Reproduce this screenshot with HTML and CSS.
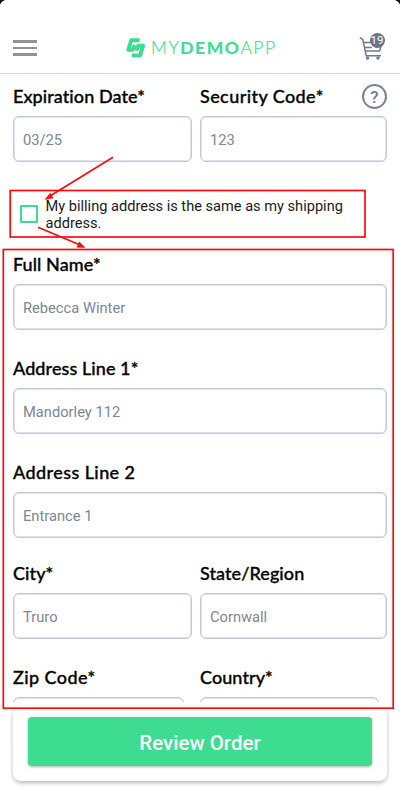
FILE: index.html
```html
<!DOCTYPE html>
<html lang="en">
<head>
<meta charset="utf-8">
<title>My Demo App - Checkout</title>
<link rel="stylesheet" href="styles.css">
</head>
<body>
<div class="app">
  <header class="header">
    <div class="menu"><span></span><span></span><span></span></div>
    <div class="brand">
      <svg class="mark" width="20" height="20" viewBox="0 0 20 20" fill="none" stroke="#3ddc91" stroke-width="4" stroke-linejoin="round">
        <path d="M13.600 2.200H5.200L2.400 11.800H6.600L8.800 7.200"/>
        <path d="M10.200 12.600 12.300 7.700H17L14.200 17.400H5.800"/>
      </svg>
      <div class="word">MY<b>DEMO</b>APP</div>
    </div>
    <div class="cart">
      <svg width="28" height="30" viewBox="0 0 28 30" fill="none" stroke="#717a8c" stroke-width="1.500">
        <path d="M.8 4.700 3.800 6.500 7.200 22.700H22M4.500 9.500H12M5.800 18H20.500L22 13.500M5.500 14.500H13"/>
        <circle cx="8.500" cy="25" r="1"/><circle cx="19" cy="25" r="1"/>
      </svg>
      <span class="badge">19</span>
    </div>
  </header>

  <main class="form">
    <div class="row first">
      <div class="field"><div class="label">Expiration Date*</div><div class="input">03/25</div></div>
      <div class="field"><div class="label wide">Security Code*<span class="help">?</span></div><div class="input">123</div></div>
    </div>
    <div class="same">
      <span class="check"></span>
      <div class="same-text">My billing address is the same as my shipping<br>address.</div>
    </div>
    <div class="field"><div class="label">Full Name*</div><div class="input">Rebecca Winter</div></div>
    <div class="field"><div class="label">Address Line 1*</div><div class="input">Mandorley 112</div></div>
    <div class="field last"><div class="label wide">Address Line 2</div><div class="input">Entrance 1</div></div>
    <div class="row">
      <div class="field"><div class="label">City*</div><div class="input">Truro</div></div>
      <div class="field"><div class="label">State/Region</div><div class="input">Cornwall</div></div>
    </div>
    <div class="row cut">
      <div class="field"><div class="label wide">Zip Code*</div><div class="input"></div></div>
      <div class="field"><div class="label">Country*</div><div class="input"></div></div>
    </div>
  </main>

  <footer class="footer"><div class="button">Review Order</div></footer>

  <svg class="notes" width="400" height="787" viewBox="0 0 400 787">
    <path fill="#161616" d="M0 0H5Q1.500 1 0 4.500ZM400 0H395Q398.500 1 400 4.500Z"/>
    <g fill="none" stroke="#fb0d0d" stroke-width="1.700">
      <rect x="10.200" y="190.500" width="354.800" height="46.500"/>
      <rect x="3.300" y="249.500" width="389.900" height="458.700"/>
      <path d="M113 157.300 50 196M38 227.300 79 244.500"/>
    </g>
    <path fill="#fb0d0d" d="M44.500 199.800 50.300 192.800 53.500 198.300ZM85.500 247.800 76.500 247.500 79.200 241.500Z"/>
  </svg>
</div>
</body>
</html>
```
FILE: styles.css
```css
* { box-sizing: border-box; }
body { margin: 0; background: #fff; }
.app {
  position: relative;
  width: 400px;
  height: 787px;
  overflow: hidden;
  background: #fff;
  font-family: Roboto, sans-serif;
  display: flex;
  flex-direction: column;
}
.header {
  height: 74px;
  flex: none;
  padding: 22px 13px 0 13px;
  border-bottom: 1px solid #d6d7da;
  display: flex;
  align-items: center;
}
.menu { display: flex; flex-direction: column; gap: 4px; width: 24px; padding-top: 1px; }
.menu span { height: 2.500px; background: #929292; }
.brand { display: flex; align-items: center; gap: 5px; margin-left: 89px; }
.word {
  font: 300 17.500px/20px Lato, sans-serif;
  letter-spacing: 1.500px;
  color: #3ddc91;
  -webkit-text-stroke: .2px #3ddc91;
}
.word b { font-weight: 700; }
.cart { position: relative; width: 28px; height: 30px; margin-left: auto; }
.cart svg { display: block; }
.badge {
  position: absolute;
  left: 10.500px;
  top: 0;
  width: 15px;
  height: 15px;
  border-radius: 50%;
  background: #697386;
  color: #fff;
  font-size: 11.500px;
  line-height: 15px;
  text-align: center;
}
.form { height: 628px; flex: none; overflow: hidden; padding: 12px 13px 0; }
.row { display: grid; grid-template-columns: 179px 187px; gap: 8px; }
.label {
  display: flex;
  justify-content: space-between;
  align-items: center;
  height: 20px;
  margin-bottom: 10px;
  font: 500 18px/20px Lato, sans-serif;
  letter-spacing: .08px;
  font-variant-ligatures: none;
  -webkit-text-stroke: .35px #050505;
  color: #050505;
  white-space: nowrap;
}
.label.wide { letter-spacing: .42px; }
.help {
  width: 25px;
  height: 25px;
  border: 2px solid #7b8496;
  border-radius: 50%;
  font: 500 17px/22px Roboto, sans-serif;
  letter-spacing: 0;
  -webkit-text-stroke: 0;
  color: #717a8c;
  text-align: center;
}
.input {
  height: 46px;
  padding-left: 9px;
  border: 1px solid #c2c8d8;
  box-shadow: inset 0 0 0 .5px #c2c8d8;
  border-radius: 6px;
  font-size: 14.700px;
  line-height: 46px;
  color: #7d8596;
}
.field { margin-bottom: 28px; }
.field.last { margin-bottom: 25px; }
.first .field { margin-bottom: 0; }
.same { display: flex; align-items: center; height: 92px; padding: 12px 0 0 7px; gap: 7.500px; }
.check { width: 18px; height: 18px; border: 2px solid #3ddc91; border-radius: 1px; }
.same-text { padding-top: 2px; font-size: 14.600px; line-height: 17px; color: #1b1b1b; white-space: nowrap; }
.cut { grid-template-columns: 171px 179px; gap: 16px; }
.footer {
  height: 75px;
  flex: none;
  margin: 4px 13px 0;
  padding: 11px 15px 0;
  border-radius: 8px;
  background: #fff;
  box-shadow: 0 2px 4px rgba(0, 0, 0, .28);
}
.button {
  height: 49px;
  border-radius: 4px;
  background: #3ddc91;
  box-shadow: 0 1px 3px rgba(0, 0, 0, .3);
  color: #fff;
  font-size: 20.500px;
  font-weight: 500;
  line-height: 52px;
  text-align: center;
}
.notes { position: absolute; left: 0; top: 0; }
```
